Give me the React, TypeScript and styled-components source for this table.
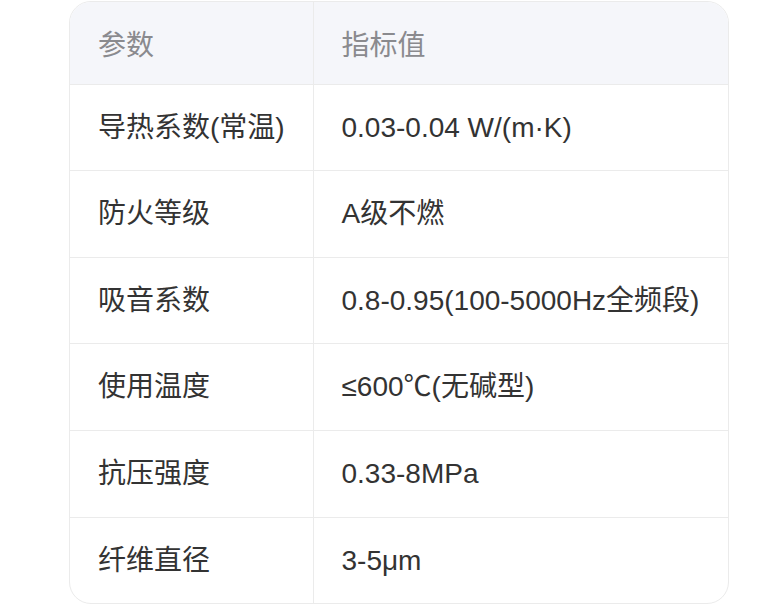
import styled, { createGlobalStyle } from "styled-components";

const GlobalStyle = createGlobalStyle`
    body {
        margin: 0;
        background: #ffffff;
        font-family: "Liberation Sans", "Noto Sans CJK SC", sans-serif;
    }
`;

const Page = styled.div`
    padding: 1px 0 0 69px;
`;

const Card = styled.div`
    width: 660px;
    border: 1px solid #ebebeb;
    border-radius: 22px;
    overflow: hidden;
    box-sizing: border-box;
`;

const Table = styled.table`
    width: 100%;
    border-collapse: collapse;
    table-layout: fixed;
    font-size: 28px;
    line-height: 41.6px;
`;

const HeadCell = styled.th<{ $first?: boolean }>`
    box-sizing: border-box;
    text-align: left;
    font-weight: 400;
    color: #8a8a8e;
    background: #f5f6fa;
    padding: 23px 0 17px 28px;
    width: ${p => (p.$first ? "243px" : "auto")};
    border-bottom: 1px solid #ebebeb;
    border-right: ${p => (p.$first ? "1px solid #ebebeb" : "none")};
`;

const Cell = styled.td<{ $first?: boolean; $last?: boolean }>`
    color: #333333;
    padding: 22px 0 22px 28px;
    white-space: nowrap;
    border-bottom: ${p => (p.$last ? "none" : "1px solid #ebebeb")};
    border-right: ${p => (p.$first ? "1px solid #ebebeb" : "none")};
`;

const rows: [string, string][] = [
    ["导热系数(常温)", "0.03-0.04 W/(m·K)"],
    ["防火等级", "A级不燃"],
    ["吸音系数", "0.8-0.95(100-5000Hz全频段)"],
    ["使用温度", "≤600℃(无碱型)"],
    ["抗压强度", "0.33-8MPa"],
    ["纤维直径", "3-5μm"],
];

export default function App() {
    return (
        <>
            <GlobalStyle />
            <Page>
                <Card>
                    <Table>
                        <thead>
                            <tr>
                                <HeadCell $first>参数</HeadCell>
                                <HeadCell>指标值</HeadCell>
                            </tr>
                        </thead>
                        <tbody>
                            {rows.map(([name, value], i) => (
                                <tr key={name}>
                                    <Cell $first $last={i === rows.length - 1}>{name}</Cell>
                                    <Cell $last={i === rows.length - 1}>{value}</Cell>
                                </tr>
                            ))}
                        </tbody>
                    </Table>
                </Card>
            </Page>
        </>
    );
}
